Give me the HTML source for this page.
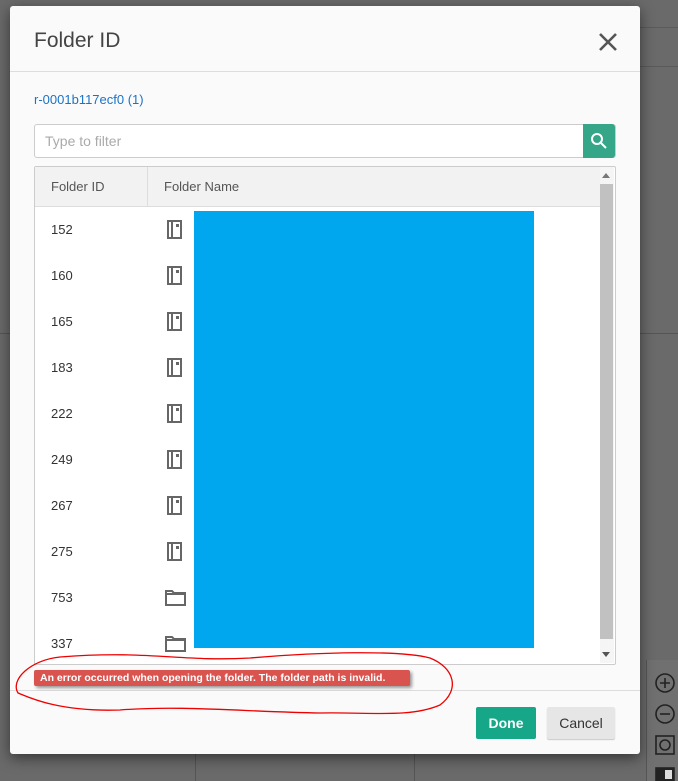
<!DOCTYPE html>
<html><head><style>
body{margin:0;width:678px;height:781px;background:#6a6a6a;position:relative;overflow:hidden;font-family:"Liberation Sans",sans-serif;}
.abs{position:absolute}
.dlg{left:10px;top:6px;width:630px;height:748px;background:#fafafa;border-radius:3px;box-shadow:0 4px 14px rgba(0,0,0,.5)}
.num{position:absolute;left:51px;font-size:13px;color:#333}
.ic{position:absolute;left:167px;width:15px;height:19px;border:2px solid #666;box-sizing:border-box}
.ic:after{content:"";position:absolute;left:2px;top:-2px;width:2px;height:19px;background:#666}
.ic:before{content:"";position:absolute;left:7px;top:2px;width:3px;height:3px;background:#666}
.fd{position:absolute;left:165px;width:21px;height:16px}
</style></head><body>
<div class="abs" style="left:640px;top:27px;width:38px;height:1px;background:#5a5a5a"></div>
<div class="abs" style="left:640px;top:66px;width:38px;height:1px;background:#5a5a5a"></div>
<div class="abs" style="left:0;top:333px;width:678px;height:1px;background:#555"></div>
<div class="abs" style="left:646px;top:660px;width:32px;height:121px;background:#707070;border-left:1px solid #555"></div>
<div class="abs" style="left:195px;top:754px;width:1px;height:27px;background:#555"></div>
<div class="abs" style="left:414px;top:754px;width:1px;height:27px;background:#555"></div>
<svg class="abs" style="left:654px;top:672px" width="24" height="109" viewBox="0 0 24 109" fill="none" stroke="#222" stroke-width="1.6">
<circle cx="11" cy="11" r="9"/><path d="M6 11h10M11 6v10"/>
<circle cx="11" cy="42" r="9"/><path d="M6 42h10"/>
<rect x="2" y="64" width="18" height="18"/><circle cx="11" cy="73" r="5"/>
<rect x="2" y="96" width="18" height="13" fill="#222"/><rect x="11" y="98" width="7" height="9" fill="#ddd" stroke="none"/>
</svg>
<div class="abs dlg">
 <div class="abs" style="left:24px;top:23px;font-size:21px;color:#444">Folder ID</div>
 <svg class="abs" style="left:589px;top:27px" width="18" height="18" viewBox="0 0 18 18"><path d="M1 1L17 17M17 1L1 17" stroke="#555" stroke-width="2.6"/></svg>
 <div class="abs" style="left:0;top:65px;width:630px;height:1px;background:#ddd"></div>
 <div class="abs" style="left:24px;top:86px;font-size:13px;color:#1a73c9">r-0001b117ecf0 (1)</div>
 <div class="abs" style="left:24px;top:118px;width:580px;height:32px;background:#fff;border:1px solid #ccc;border-radius:3px"></div>
 <div class="abs" style="left:35px;top:127px;font-size:14px;color:#aaa">Type to filter</div>
 <div class="abs" style="left:573px;top:118px;width:32px;height:34px;background:#36a688;border-radius:0 3px 3px 0"></div>
 <svg class="abs" style="left:580px;top:126px" width="18" height="18" viewBox="0 0 18 18" fill="none" stroke="#fff" stroke-width="2"><circle cx="7" cy="7" r="5"/><path d="M11 11l5 5"/></svg>
 <div class="abs" style="left:24px;top:160px;width:580px;height:497px;background:#fff;border:1px solid #ccc;border-radius:2px"></div>
 <div class="abs" style="left:25px;top:161px;width:565px;height:39px;background:#f2f2f2;border-bottom:1px solid #ddd"></div>
 <div class="abs" style="left:137px;top:161px;width:1px;height:39px;background:#ddd"></div>
 <div class="abs" style="left:41px;top:173px;font-size:13px;color:#555">Folder ID</div>
 <div class="abs" style="left:154px;top:173px;font-size:13px;color:#555">Folder Name</div>
 <div class="abs" style="left:590px;top:161px;width:14px;height:496px;background:#f5f5f5"></div>
 <div class="abs" style="left:590px;top:178px;width:13px;height:455px;background:#c1c1c1"></div>
 <div class="abs" style="left:592px;top:167px;width:0;height:0;border:4px solid transparent;border-bottom:5px solid #777;border-top:0"></div>
 <div class="abs" style="left:592px;top:646px;width:0;height:0;border:4px solid transparent;border-top:5px solid #555;border-bottom:0"></div>
</div>
<div class="num" style="top:222px">152</div><div class="ic" style="top:220px"></div>
<div class="num" style="top:268px">160</div><div class="ic" style="top:266px"></div>
<div class="num" style="top:314px">165</div><div class="ic" style="top:312px"></div>
<div class="num" style="top:360px">183</div><div class="ic" style="top:358px"></div>
<div class="num" style="top:406px">222</div><div class="ic" style="top:404px"></div>
<div class="num" style="top:452px">249</div><div class="ic" style="top:450px"></div>
<div class="num" style="top:498px">267</div><div class="ic" style="top:496px"></div>
<div class="num" style="top:544px">275</div><div class="ic" style="top:542px"></div>
<div class="num" style="top:590px">753</div>
<svg class="fd" style="top:590px" viewBox="0 0 21 16" fill="none" stroke="#666" stroke-width="2"><path d="M1 1h6l2 2h11v12H1z"/><path d="M1 4h19"/></svg>
<div class="num" style="top:636px">337</div>
<svg class="fd" style="top:636px" viewBox="0 0 21 16" fill="none" stroke="#666" stroke-width="2"><path d="M1 1h6l2 2h11v12H1z"/><path d="M1 4h19"/></svg>
<div class="abs" style="left:194px;top:211px;width:340px;height:437px;background:#00a7ef"></div>
<div class="abs" style="left:10px;top:690px;width:630px;height:1px;background:#ddd"></div>
<div class="abs" style="left:34px;top:670px;width:376px;height:16px;background:#d9534f;border-radius:2px;box-shadow:2px 2px 3px rgba(0,0,0,.4);color:#fff;font-size:10.5px;font-weight:bold;line-height:16px;padding-left:6px;box-sizing:border-box;white-space:nowrap">An error occurred when opening the folder. The folder path is invalid.</div>
<svg class="abs" style="left:0;top:0" width="678" height="781" fill="none" stroke="#e00" stroke-width="1.3"><path d="M60 657C150 650 180 662 250 658C320 652 400 650 430 658C455 668 460 690 440 705C410 718 370 712 320 713C250 712 180 705 120 710C60 712 30 698 18 693C10 680 30 660 60 657"/></svg>
<div class="abs" style="left:476px;top:707px;width:60px;height:32px;background:#16a688;border-radius:2px;color:#fff;font-weight:bold;font-size:14px;text-align:center;line-height:32px">Done</div>
<div class="abs" style="left:547px;top:707px;width:68px;height:32px;background:#e6e6e6;border-radius:2px;color:#333;font-size:14px;text-align:center;line-height:32px;box-shadow:0 1px 1px rgba(0,0,0,.2)">Cancel</div>
</body></html>
